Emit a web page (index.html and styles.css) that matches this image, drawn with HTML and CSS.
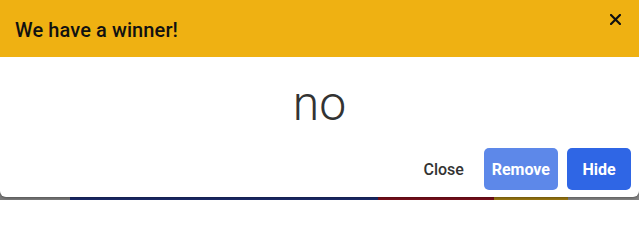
FILE: index.html
```html
<!DOCTYPE html>
<html>
<head>
<meta charset="utf-8">
<link rel="stylesheet" href="styles.css">
</head>
<body>
<div class="scene">
  <div class="modal">
    <div class="header">
      <h2 class="title">We have a winner!</h2>
      <button class="x" aria-label="Close">
        <svg width="11" height="11" viewBox="0 0 11 11"><path d="M1 1L10 10M10 1L1 10" stroke="#111" stroke-width="2.2" stroke-linecap="square"/></svg>
      </button>
    </div>
    <div class="content">no</div>
    <div class="footer">
      <button class="btn text">Close</button>
      <button class="btn light">Remove</button>
      <button class="btn solid">Hide</button>
    </div>
  </div>
</div>
</body>
</html>
```
FILE: styles.css
```css
html, body { margin: 0; padding: 0; }
body { font-family: Roboto, "Liberation Sans", sans-serif; }
.scene {
  width: 639px;
  height: 200px;
  overflow: hidden;
  background: linear-gradient(to right, #7c7c7c 0 70px, #1c2b6a 70px 378px, #7a0f1c 378px 494px, #9c7912 494px 568px, #858585 568px);
}
.modal {
  height: 197px;
  background: #fff;
  border-radius: 0 0 6px 6px;
  box-shadow: 0 1px 3px rgba(0,0,0,0.35);
  display: flex;
  flex-direction: column;
  overflow: hidden;
}
.header {
  height: 57px;
  flex: none;
  background: #efb112;
  display: flex;
  align-items: center;
  justify-content: space-between;
  padding: 0 12px 0 15px;
  box-sizing: border-box;
}
.title {
  margin: 0;
  font-size: 20px;
  font-weight: 500;
  color: #111;
  padding-top: 2px;
  letter-spacing: 0.1px;
}
.x {
  width: 24px;
  height: 24px;
  border: 0;
  background: transparent;
  padding: 0;
  display: flex;
  align-items: center;
  justify-content: center;
  margin-top: -18px;
}
.content {
  flex: 1;
  display: flex;
  align-items: center;
  justify-content: center;
  font-size: 48px;
  font-weight: 300;
  color: #333;
  padding-top: 1px;
}
.footer {
  display: flex;
  justify-content: flex-end;
  gap: 8px;
  padding: 0 8px 7px;
}
.btn {
  min-width: 64px;
  height: 42px;
  padding: 0 8px;
  border: 0;
  border-radius: 5px;
  font-family: Roboto, "Liberation Sans", sans-serif;
  font-size: 16px;
  font-weight: 700;
  color: #fff;
}
.btn.text { background: transparent; color: #333; font-weight: 500; }
.btn.light { background: #5d88e9; }
.btn.solid { background: #2f66e5; margin-left: 1px; }
```
